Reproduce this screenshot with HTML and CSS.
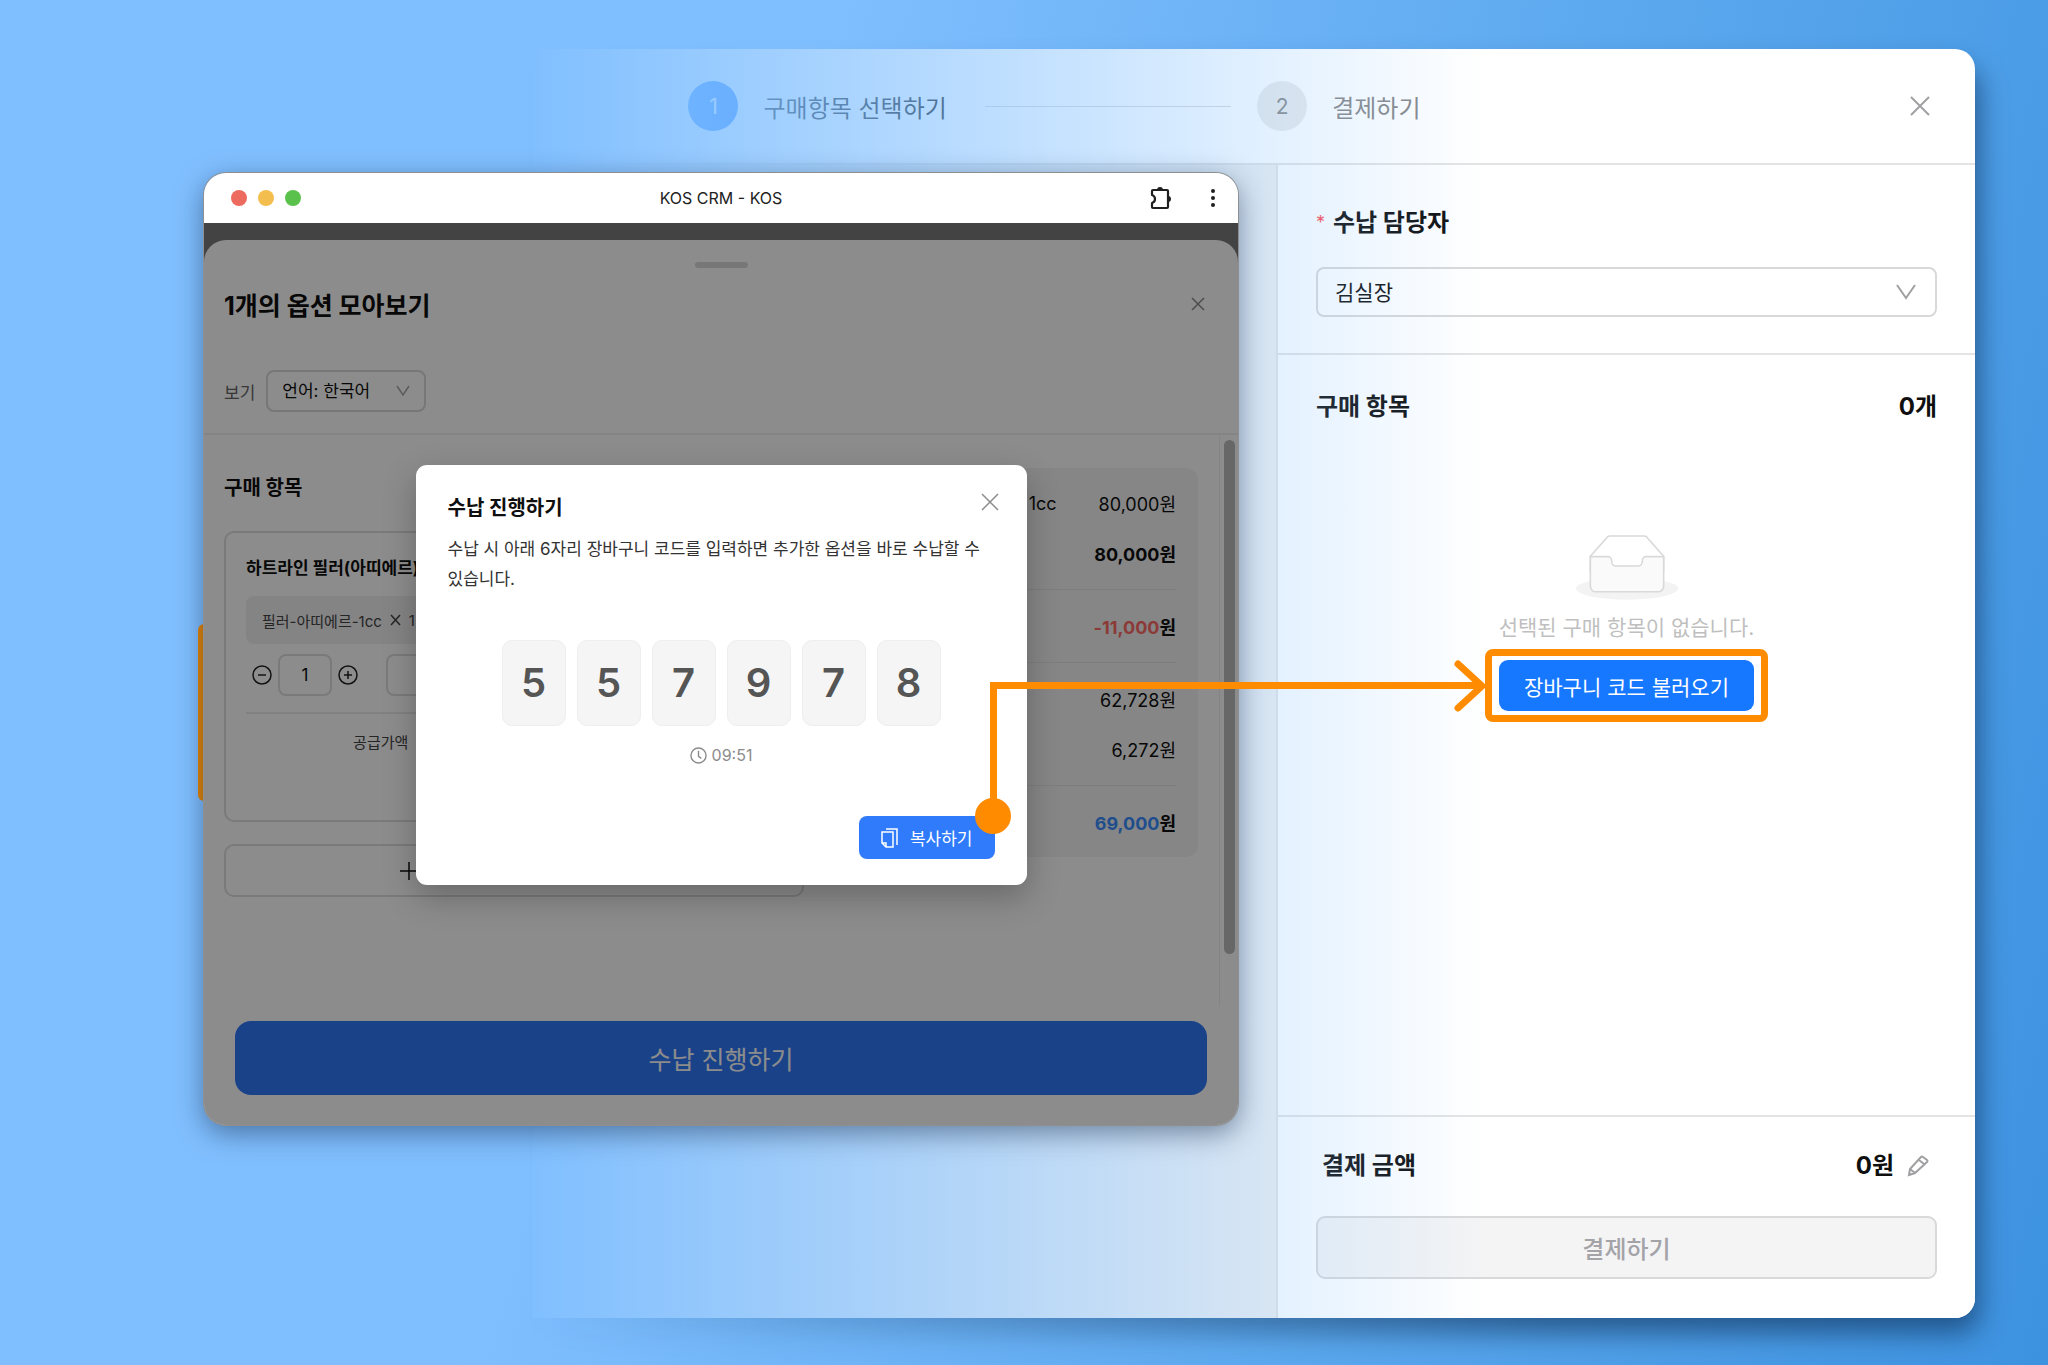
FILE: index.html
```html
<!DOCTYPE html>
<html lang="ko">
<head>
    <meta charset="UTF-8">
    <meta name="viewport" content="width=device-width, initial-scale=1.0">
    <title>KOS CRM - KOS</title>
    <link rel="stylesheet" href="styles.css">
</head>
<body>
    <div class="stage">
        <!-- Checkout page, fading out to the left -->
        <div class="backdrop">
            <div class="checkout">
                <header class="checkout-header">
                    <ol class="steps">
                        <li class="step active"><span class="step-num">1</span>구매항목 선택하기</li>
                        <li class="step-line"></li>
                        <li class="step"><span class="step-num">2</span>결제하기</li>
                    </ol>
                    <button class="icon-btn" aria-label="닫기">
                        <svg width="20" height="20" viewBox="0 0 20 20"><path d="M1 1l18 18M19 1L1 19" /></svg>
                    </button>
                </header>
                <div class="checkout-body">
                    <div class="checkout-main"></div>
                    <aside class="side">
                        <section class="side-manager">
                            <label class="side-label" for="manager"><span class="required">*</span>수납 담당자</label>
                            <div class="select-wrap">
                                <select id="manager" class="select select-lg">
                                    <option>김실장</option>
                                </select>
                                <svg class="chevron" width="20" height="16" viewBox="0 0 20 16"><path d="M1 1l9 13 9-13" /></svg>
                            </div>
                        </section>
                        <section class="side-items">
                            <div class="side-row">
                                <h2>구매 항목</h2>
                                <strong>0개</strong>
                            </div>
                            <div class="empty">
                                <svg width="102" height="66" viewBox="0 0 64 41">
                                    <g transform="translate(0 1)" fill="none" fill-rule="evenodd">
                                        <ellipse fill="#f3f3f3" cx="32" cy="33" rx="32" ry="7" />
                                        <g stroke="#d9d9d9" fill-rule="nonzero">
                                            <path fill="#fff" d="M55 12.76L44.854 1.258C44.367.474 43.656 0 42.907 0H21.093c-.749 0-1.46.474-1.947 1.257L9 12.761V22h46v-9.24z" />
                                            <path fill="#fafafa" d="M41.613 15.931c0-1.605.994-2.93 2.227-2.931H55v18.137C55 33.26 53.68 35 52.05 35h-40.1C10.32 35 9 33.259 9 31.137V13h11.16c1.233 0 2.227 1.323 2.227 2.928v.022c0 1.605 1.005 2.901 2.237 2.901h14.752c1.232 0 2.237-1.308 2.237-2.913v-.007z" />
                                        </g>
                                    </g>
                                </svg>
                                <p>선택된 구매 항목이 없습니다.</p>
                                <div class="highlight">
                                    <button class="load-btn">장바구니 코드 불러오기</button>
                                </div>
                            </div>
                        </section>
                        <section class="side-pay">
                            <div class="side-row pay-row">
                                <h2>결제 금액</h2>
                                <div class="pay-amount">
                                    <strong>0원</strong>
                                    <button class="icon-btn" aria-label="금액 수정">
                                        <svg width="22" height="22" viewBox="0 0 22 22"><path d="M2 20l1-6L14 2q1-1 2 0l4 3q1 1 0 2L8 18zM12 5l5 4M3 14l5 4" /></svg>
                                    </button>
                                </div>
                            </div>
                            <button class="pay-btn" disabled>결제하기</button>
                        </section>
                    </aside>
                </div>
            </div>
        </div>

        <div class="marker"></div>

        <!-- Browser window -->
        <div class="window">
            <div class="titlebar">
                <div class="lights"><i></i><i></i><i></i></div>
                <span>KOS CRM - KOS</span>
                <div class="titlebar-icons">
                    <svg width="24" height="24" viewBox="0 0 24 24">
                        <path fill="none" stroke="#1f1f1f" stroke-width="2.2" stroke-linejoin="round" d="M3 5q0-1 1-1h14q1 0 1 1v16q0 1-1 1H4q-1 0-1-1v-4q3-1 3-4T3 9z" />
                        <path fill="#1f1f1f" d="M8 4a3 3 0 0 1 6 0zM19 10a3 3 0 0 1 0 6z" />
                    </svg>
                    <svg width="6" height="18" viewBox="0 0 6 18" fill="#1f1f1f"><circle cx="3" cy="2" r="2" /><circle cx="3" cy="9" r="2" /><circle cx="3" cy="16" r="2" /></svg>
                </div>
            </div>
            <div class="viewport">
                <div class="sheet">
                    <div class="handle"></div>
                    <div class="sheet-head">
                        <h1>1개의 옵션 모아보기</h1>
                        <button class="icon-btn" aria-label="닫기">
                            <svg width="14" height="14" viewBox="0 0 14 14"><path d="M1 1l12 12M13 1L1 13" /></svg>
                        </button>
                    </div>
                    <div class="filter">
                        <label for="lang">보기</label>
                        <div class="select-wrap">
                            <select id="lang" class="select">
                                <option>언어: 한국어</option>
                            </select>
                            <svg class="chevron" width="14" height="12" viewBox="0 0 14 12"><path d="M1 1l6 9 6-9" /></svg>
                        </div>
                    </div>
                    <div class="sheet-body">
                        <div class="columns">
                            <div class="items">
                                <h2>구매 항목</h2>
                                <div class="card">
                                    <h3>하트라인 필러(아띠에르)</h3>
                                    <div class="chip">필러-아띠에르-1cc<svg width="11" height="12" viewBox="0 0 11 12"><path d="M1 1l9 10M10 1L1 11" /></svg>1</div>
                                    <div class="qty">
                                        <button class="icon-btn" aria-label="빼기">
                                            <svg width="20" height="20" viewBox="0 0 20 20"><circle cx="10" cy="10" r="9" /><path d="M6 10h8" /></svg>
                                        </button>
                                        <input class="qty-input" type="text" value="1" aria-label="수량">
                                        <button class="icon-btn" aria-label="더하기">
                                            <svg width="20" height="20" viewBox="0 0 20 20"><circle cx="10" cy="10" r="9" /><path d="M6 10h8M10 6v8" /></svg>
                                        </button>
                                        <input class="price-input" type="text" aria-label="금액">
                                    </div>
                                    <p class="supply">공급가액</p>
                                </div>
                                <button class="add-btn" aria-label="구매 항목 추가">
                                    <svg width="18" height="18" viewBox="0 0 18 18"><path d="M0 9h18M9 0v18" /></svg>
                                </button>
                            </div>
                            <div class="summary">
                                <div class="sum-row"><span>1cc</span><span>80,000원</span></div>
                                <div class="sum-row bold"><span>80,000원</span></div>
                                <hr>
                                <div class="sum-row bold"><span><em class="red">-11,000</em>원</span></div>
                                <hr>
                                <div class="sum-row"><span>62,728원</span></div>
                                <div class="sum-row"><span>6,272원</span></div>
                                <hr>
                                <div class="sum-row bold"><span><em class="blue">69,000</em>원</span></div>
                            </div>
                        </div>
                        <div class="scrollbar"><div class="thumb"></div></div>
                    </div>
                    <div class="sheet-foot">
                        <button class="cta">수납 진행하기</button>
                    </div>
                </div>
                <div class="mask"></div>
            </div>

            <div class="modal" role="dialog" aria-labelledby="modal-title">
                <div class="modal-head">
                    <h2 id="modal-title">수납 진행하기</h2>
                    <button class="icon-btn" aria-label="닫기">
                        <svg width="18" height="18" viewBox="0 0 18 18"><path d="M1 1l16 16M17 1L1 17" /></svg>
                    </button>
                </div>
                <p class="modal-desc">수납 시 아래 6자리 장바구니 코드를 입력하면 추가한 옵션을 바로 수납할 수 있습니다.</p>
                <div class="code">
                    <span>5</span><span>5</span><span>7</span><span>9</span><span>7</span><span>8</span>
                </div>
                <div class="timer">
                    <svg width="17" height="17" viewBox="0 0 18 18"><circle cx="9" cy="9" r="8" /><path d="M9 4v6l3 2" /></svg>
                    09:51
                </div>
                <button class="copy-btn">
                    <svg width="17" height="20" viewBox="0 0 17 20"><path d="M5 1h11v16M1 4h11v15H5l-4-4zM1 15h4v4" /></svg>
                    복사하기
                </button>
            </div>
        </div>

        <!-- Arrow from the copy button to the load button -->
        <div class="connector">
            <svg width="34" height="54" viewBox="0 0 34 54"><path d="M5 5l24 22L5 49" /></svg>
        </div>
    </div>
</body>
</html>
```
FILE: styles.css
```css
* {
    margin: 0;
    padding: 0;
    box-sizing: border-box;
}

body {
    font-family: Inter, 'Noto Sans CJK KR', sans-serif;
    color: #0f0f0f;
}

button, input, select {
    font-family: inherit;
    font-size: inherit;
    color: inherit;
}

button {
    border: none;
    background: none;
    cursor: pointer;
}

svg {
    display: block;
    flex: none;
}

ol {
    list-style: none;
}

.icon-btn {
    display: flex;
    color: #8c8c8c;
}

.icon-btn svg,
.chevron,
.chip svg,
.add-btn svg,
.timer svg,
.copy-btn svg {
    fill: none;
    stroke: currentColor;
    stroke-width: 1.5;
}

.checkout .icon-btn svg,
.select-lg + .chevron {
    stroke-width: 2;
    color: #a0a0a3;
}

.stage {
    position: relative;
    min-height: 100vh;
    overflow: hidden;
    background: linear-gradient(105deg, #80bfff 34%, #5ba8ee 68%, #3d92e0 100%);
}

/* Checkout page */
.backdrop {
    position: relative;
    display: flex;
    min-height: 100vh;
    padding: 49px 73px 47px 26vw;
}

/* shadow that gets stronger to the right */
.backdrop::before {
    content: '';
    position: absolute;
    top: 68px;
    right: 69px;
    bottom: 32px;
    left: 26vw;
    border-radius: 20px;
    background: linear-gradient(90deg, transparent, rgba(0, 20, 50, 0.5) 70%);
    filter: blur(14px);
}

.checkout {
    position: relative;
    flex: 1;
    display: flex;
    flex-direction: column;
    background: #fff;
    border-radius: 0 20px 20px 0;
    overflow: hidden;
}

.checkout::after {
    content: '';
    position: absolute;
    inset: 0;
    background: linear-gradient(90deg, #80bfff, rgba(128, 191, 255, 0) 66%);
    pointer-events: none;
}

.checkout-header {
    display: flex;
    align-items: center;
    justify-content: space-between;
    height: 116px;
    padding: 0 45px 0 156px;
    border-bottom: 2px solid #e4e4e4;
}

.steps {
    display: flex;
    align-items: center;
    width: 732px;
    font-size: 24px;
    color: #888;
}

.step {
    display: flex;
    align-items: center;
    gap: 25px;
}

.step.active {
    color: #111;
}

.step-num {
    display: flex;
    align-items: center;
    justify-content: center;
    width: 50px;
    height: 50px;
    border-radius: 50%;
    background: #ebebeb;
    font-size: 21px;
}

.step.active .step-num {
    background: #1677ff;
    color: #fff;
}

.step-line {
    flex: 1;
    height: 1px;
    margin: 0 26px 0 38px;
    background: #d9d9d9;
}

.checkout-body {
    flex: 1;
    display: flex;
}

.checkout-main {
    flex: 1;
    background: #f0f0f0;
}

.side {
    display: flex;
    flex-direction: column;
    width: 699px;
    border-left: 2px solid #e4e4e4;
    background: #fff;
}

.side h2,
.side strong,
.side-label {
    font-size: 24px;
    line-height: 36px;
    font-weight: 700;
}

.side-manager {
    padding: 40px 38px 36px;
    border-bottom: 2px solid #e4e4e4;
}

.side-label {
    display: flex;
    gap: 8px;
    margin-bottom: 26px;
}

.required {
    font-size: 18px;
    font-weight: 400;
    color: #ff4d4f;
}

.select-wrap {
    position: relative;
}

.select {
    appearance: none;
    width: 160px;
    height: 42px;
    padding: 0 14px;
    border: 2px solid #d9d9d9;
    border-radius: 8px;
    background: transparent;
    font-size: 17px;
}

.select-lg {
    width: 100%;
    height: 50px;
    padding: 0 17px;
    font-size: 21px;
}

.chevron {
    position: absolute;
    right: 16px;
    top: 15px;
    color: #a6a6a6;
}

.select-lg + .chevron {
    right: 21px;
    top: 17px;
}

.side-items {
    flex: 1;
    padding: 34px 38px;
}

.side-row {
    display: flex;
    align-items: center;
    justify-content: space-between;
}

.empty {
    display: flex;
    flex-direction: column;
    align-items: center;
    padding-top: 109px;
}

.empty p {
    margin: 12px 0 5px;
    font-size: 21px;
    line-height: 32px;
    color: #bfbfbf;
}

.highlight {
    padding: 4px 7px;
    border: 7px solid #ff8c00;
    border-radius: 8px;
}

.load-btn {
    height: 51px;
    padding: 0 25px;
    border-radius: 9px;
    background: #1677ff;
    color: #fff;
    font-size: 21px;
}

.side-pay {
    padding: 31px 38px 39px;
    border-top: 2px solid #e4e4e4;
}

.pay-row {
    padding: 0 8px 0 6px;
    margin-bottom: 32px;
}

.pay-amount {
    display: flex;
    align-items: center;
    gap: 13px;
}

.pay-btn {
    width: 100%;
    height: 63px;
    border: 2px solid #d9d9d9;
    border-radius: 9px;
    background: #f4f4f5;
    color: #a3a3a8;
    font-size: 24px;
    font-weight: 500;
}

/* Orange strip peeking out behind the window */
.marker {
    position: absolute;
    left: 198px;
    top: 624px;
    width: 20px;
    height: 177px;
    border-radius: 6px;
    background: #e88400;
}

/* Browser window */
.window {
    position: absolute;
    left: 204px;
    top: 173px;
    width: 1034px;
    border-radius: 22px;
    overflow: hidden;
    box-shadow: 0 0 0 1px #8f8f8f, 0 8px 28px rgba(20, 40, 70, 0.5);
}

.titlebar {
    display: grid;
    grid-template-columns: 1fr auto 1fr;
    align-items: center;
    height: 50px;
    padding: 0 22px;
    background: #fff;
    font-size: 16px;
    color: #222;
}

.lights {
    display: flex;
    gap: 11px;
    padding-left: 5px;
}

.lights i {
    width: 16px;
    height: 16px;
    border-radius: 50%;
    background: #ed6a5e;
}

.lights i:nth-child(2) {
    background: #f4be4f;
}

.lights i:nth-child(3) {
    background: #5ac24c;
}

.titlebar-icons {
    display: flex;
    align-items: center;
    justify-content: flex-end;
    gap: 37px;
}

.viewport {
    position: relative;
    padding-top: 17px;
    background: #7b7b7b;
}

.mask {
    position: absolute;
    inset: 0;
    background: rgba(0, 0, 0, 0.45);
}

.sheet {
    padding-top: 22px;
    border-radius: 22px 22px 0 0;
    background: #fff;
}

.handle {
    width: 53px;
    height: 6px;
    margin: 0 auto;
    border-radius: 3px;
    background: #d9d9d9;
}

.sheet-head {
    display: flex;
    align-items: center;
    justify-content: space-between;
    height: 72px;
    padding: 0 33px 0 20px;
}

.sheet-head h1 {
    font-size: 25px;
}

.filter {
    display: flex;
    align-items: center;
    gap: 11px;
    padding: 30px 20px 21px;
    border-bottom: 2px solid #f0f0f0;
    font-size: 17px;
}

.filter label {
    color: #666;
}

.sheet-body {
    display: flex;
    height: 571px;
}

.columns {
    flex: 1;
    display: grid;
    grid-template-columns: 579fr 373fr;
    align-items: start;
    gap: 21px;
    padding: 33px 21px 0 20px;
}

.items h2 {
    margin-bottom: 23px;
    font-size: 20px;
    line-height: 40px;
}

.card {
    min-height: 291px;
    margin-bottom: 22px;
    padding: 21px 20px;
    border: 2px solid #dedede;
    border-radius: 10px;
}

.card h3 {
    margin-bottom: 14px;
    font-size: 17px;
    line-height: 28px;
}

.chip {
    display: flex;
    align-items: center;
    gap: 8px;
    height: 48px;
    padding: 0 16px;
    border-radius: 8px;
    background: #f0f0f0;
    font-size: 15px;
    color: #444;
}

.qty {
    display: flex;
    align-items: center;
    gap: 6px;
    padding: 10px 0 16px 6px;
    border-bottom: 2px solid #ececec;
}

.qty .icon-btn {
    color: #222;
}

.qty-input,
.price-input {
    height: 42px;
    border: 2px solid #dedede;
    border-radius: 8px;
    background: transparent;
    text-align: center;
    font-size: 17px;
}

.qty-input {
    width: 54px;
}

.price-input {
    flex: 1;
    margin-left: 22px;
}

.supply {
    padding: 17px 0 0 20%;
    font-size: 15px;
    line-height: 24px;
    color: #444;
}

.add-btn {
    width: 100%;
    height: 53px;
    padding-left: 30%;
    border: 2px solid #dedede;
    border-radius: 10px;
}

.summary {
    padding: 10px 22px;
    border-radius: 12px;
    background: #f4f4f5;
    font-size: 18px;
}

.summary hr {
    height: 1px;
    margin: 11px 0;
    border: none;
    background: #e4e4e4;
}

.sum-row {
    display: flex;
    align-items: center;
    justify-content: flex-end;
    gap: 42px;
    height: 50px;
}

.sum-row.bold {
    font-weight: 700;
}

.sum-row em {
    font-style: normal;
}

.red {
    color: #ff6b66;
}

.blue {
    color: #3b8cff;
}

.scrollbar {
    width: 19px;
    padding: 5px 3px 0 4px;
    border-left: 1px solid #f0f0f0;
}

.thumb {
    height: 514px;
    border-radius: 6px;
    background: #bcbcbc;
}

.sheet-foot {
    padding: 15px 31px 30px;
}

.cta {
    width: 100%;
    height: 74px;
    border-radius: 16px;
    background: #2f78f9;
    color: #fff;
    font-size: 25px;
}

/* Cart code dialog */
.modal {
    position: absolute;
    left: 0;
    right: 0;
    top: 292px;
    display: flex;
    flex-direction: column;
    width: 611px;
    margin: 0 auto;
    padding: 28px 32px 26px;
    border-radius: 11px;
    background: #fff;
    box-shadow: 0 12px 32px rgba(0, 0, 0, 0.25);
}

.modal-head {
    display: flex;
    justify-content: space-between;
    align-items: flex-start;
    margin-bottom: 11px;
}

.modal-head h2 {
    font-size: 20px;
    line-height: 30px;
}

.modal-head .icon-btn {
    margin-right: -4px;
}

.modal-desc {
    font-size: 17px;
    line-height: 30px;
    word-break: keep-all;
    color: #333;
}

.code {
    display: flex;
    justify-content: center;
    gap: 11px;
    margin: 46px 0 19px;
}

.code span {
    width: 64px;
    border: 1px solid #eee;
    border-radius: 10px;
    background: #f5f5f5;
    text-align: center;
    font-size: 40px;
    font-weight: 600;
    line-height: 84px;
    color: #555;
}

.timer {
    display: flex;
    align-items: center;
    justify-content: center;
    gap: 5px;
    margin-bottom: 51px;
    font-size: 16px;
    line-height: 20px;
    color: #8c8c8c;
}

.copy-btn {
    display: flex;
    align-items: center;
    align-self: flex-end;
    gap: 12px;
    height: 43px;
    padding: 0 22px;
    border-radius: 8px;
    background: #2f7bfb;
    color: #fff;
    font-size: 17px;
}

/* Arrow */
.connector {
    position: absolute;
    left: 990px;
    right: 565px;
    top: 682px;
    height: 130px;
    border: solid #ff8c00;
    border-width: 7px 0 0 7px;
}

.connector::before {
    content: '';
    position: absolute;
    left: -22px;
    bottom: -22px;
    width: 36px;
    height: 36px;
    border-radius: 50%;
    background: #ff8c00;
}

.connector svg {
    position: absolute;
    right: -4px;
    top: -30px;
    fill: none;
    stroke: #ff8c00;
    stroke-width: 7;
    stroke-linecap: round;
    stroke-linejoin: round;
}
```
